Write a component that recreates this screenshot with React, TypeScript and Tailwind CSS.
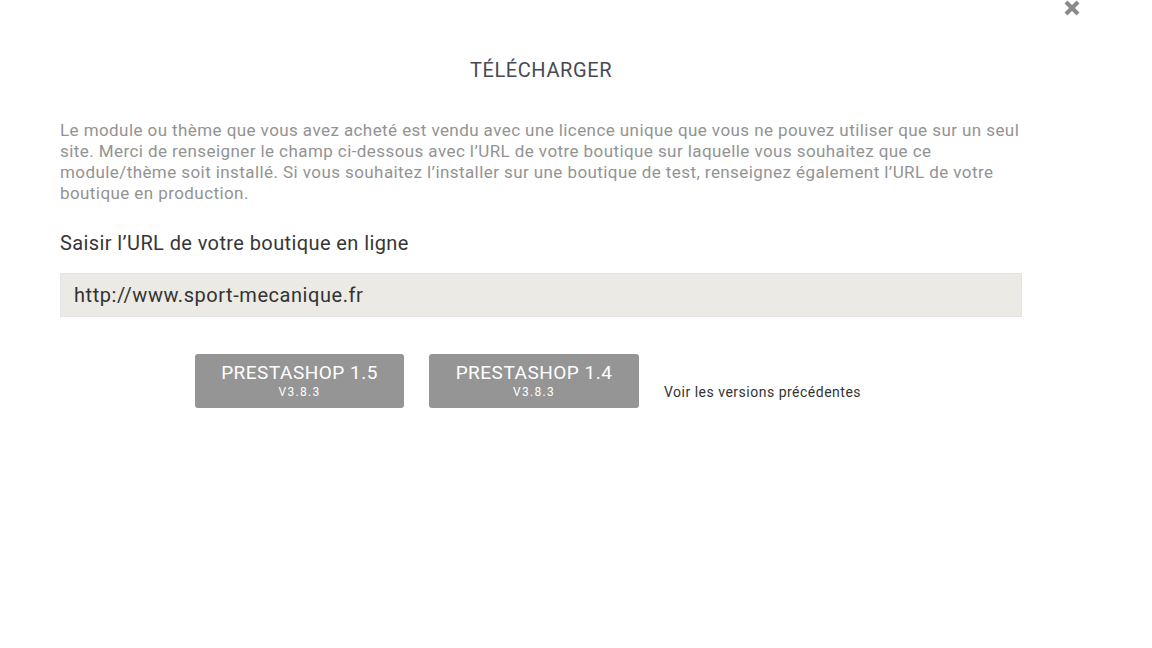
import React, { useState } from 'react';

const versions = [
  { label: 'PRESTASHOP 1.5', version: 'V3.8.3', width: 'w-[209px]' },
  { label: 'PRESTASHOP 1.4', version: 'V3.8.3', width: 'w-[210px]' },
];

const App: React.FC = () => {
  const [url, setUrl] = useState('http://www.sport-mecanique.fr');

  return (
    <div className="relative min-h-[648px] w-full bg-white font-['Roboto',sans-serif]">
      <button className="absolute right-[71px] top-0 text-[#8a8a8a]" title="Fermer">
        <svg width="18" height="18" viewBox="0 0 18 18">
          <path d="M3 2L15 14M15 2L3 14" stroke="currentColor" strokeWidth="4.2" strokeLinecap="butt" />
        </svg>
      </button>

      <div className="w-[962px] ml-[60px] pt-[58px]">
        <h2 className="text-center text-[20px] leading-[24px] tracking-[0.6px] text-[#474a52]">TÉLÉCHARGER</h2>

        <p className="mt-[38px] text-[17px] leading-[21px] tracking-[0.42px] text-[#939393]">
          Le module ou thème que vous avez acheté est vendu avec une licence unique que vous ne pouvez utiliser que sur un seul
          <br />
          site. Merci de renseigner le champ ci-dessous avec l’URL de votre boutique sur laquelle vous souhaitez que ce
          <br />
          module/thème soit installé. Si vous souhaitez l’installer sur une boutique de test, renseignez également l’URL de votre
          <br />
          boutique en production.
        </p>

        <label htmlFor="shop-url" className="block mt-[27px] text-[20px] leading-[24px] tracking-[0.4px] text-[#363636]">
          Saisir l’URL de votre boutique en ligne
        </label>

        <input
          id="shop-url"
          value={url}
          onChange={(e) => setUrl(e.target.value)}
          className="mt-[18px] block w-full h-[44px] px-[13px] bg-[#ebeae5] border border-[#e1e3e8] text-[20px] tracking-[0.55px] text-[#333] outline-none"
        />

        <div className="flex items-center mt-[37px] ml-[135px]">
          {versions.map((v, i) => (
            <button
              key={v.label}
              className={`${v.width} h-[54px] rounded-[3px] bg-[#959595] text-white flex flex-col items-center justify-center ${i > 0 ? 'ml-[25px]' : ''}`}
            >
              <span className="text-[19px] leading-[22px] tracking-[0.5px]">{v.label}</span>
              <span className="text-[12px] leading-[16px] tracking-[1.3px]">{v.version}</span>
            </button>
          ))}
          <a href="#" className="ml-[25px] mt-[22px] text-[14px] tracking-[0.5px] text-[#333]">
            Voir les versions précédentes
          </a>
        </div>
      </div>
    </div>
  );
};

export default App;
